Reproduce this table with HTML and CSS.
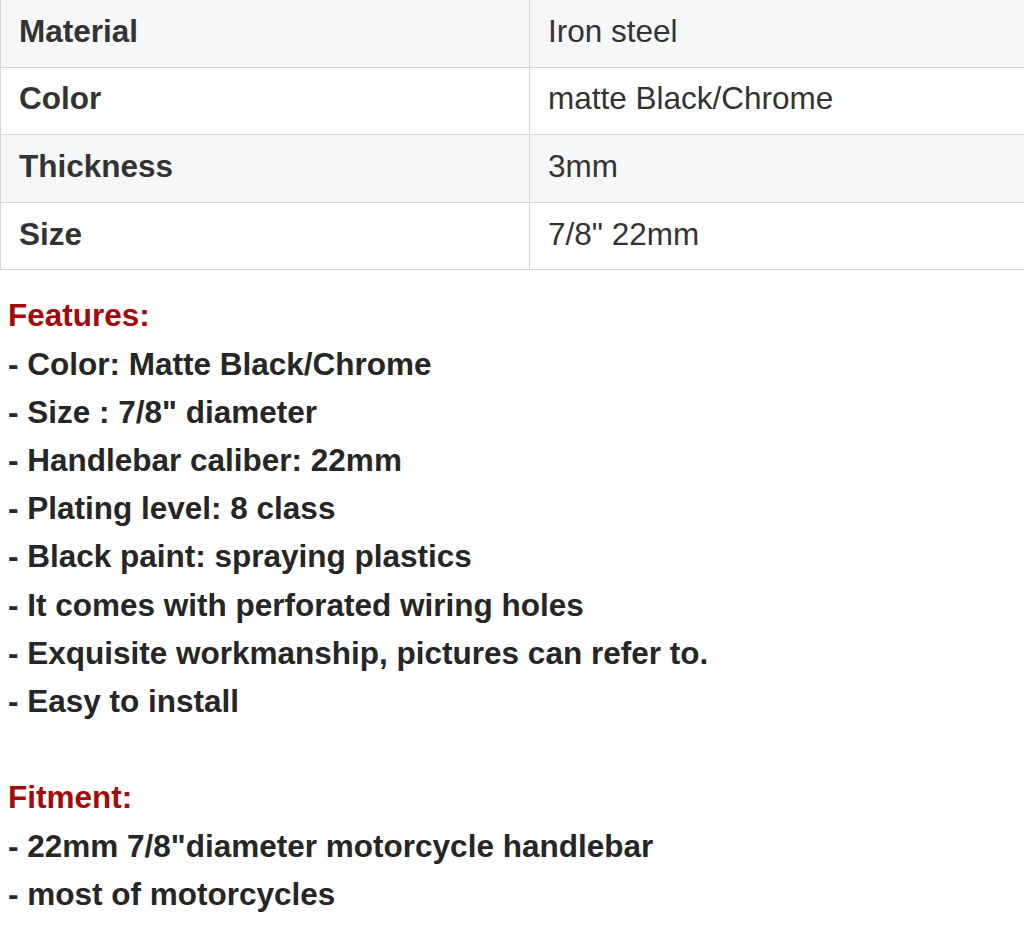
FILE: index.html
```html
<!DOCTYPE html>
<html lang="en">
<head>
    <meta charset="UTF-8">
    <title>Handlebar end mirror - specs</title>
    <link rel="stylesheet" href="styles.css">
</head>
<body>
    <table class="specs">
        <tr class="odd">
            <th>Material</th>
            <td>Iron steel</td>
        </tr>
        <tr>
            <th>Color</th>
            <td>matte Black/Chrome</td>
        </tr>
        <tr class="odd">
            <th>Thickness</th>
            <td>3mm</td>
        </tr>
        <tr>
            <th>Size</th>
            <td>7/8" 22mm</td>
        </tr>
    </table>

    <div class="desc">
        <p class="title">Features:</p>
        <p>- Color: Matte Black/Chrome</p>
        <p>- Size : 7/8" diameter</p>
        <p>- Handlebar caliber: 22mm</p>
        <p>- Plating level: 8 class</p>
        <p>- Black paint: spraying plastics</p>
        <p>- It comes with perforated wiring holes</p>
        <p>- Exquisite workmanship, pictures can refer to.</p>
        <p>- Easy to install</p>
        <p class="blank">&nbsp;</p>
        <p class="title">Fitment:</p>
        <p>- 22mm 7/8"diameter motorcycle handlebar</p>
        <p>- most of motorcycles</p>
    </div>
</body>
</html>
```

FILE: styles.css
```css
body {
    margin: 0;
    overflow: hidden;
    font-family: "Liberation Sans", Arial, sans-serif;
    color: #333;
    background: #fff;
}
.specs {
    width: 1040px;
    border-collapse: collapse;
    margin-top: -1px;
    font-size: 31.5px;
}
.specs tr {
    height: 67.6px;
}
.specs th,
.specs td {
    border: 1px solid #d6d6d6;
    padding: 0 18px 4px;
    text-align: left;
    vertical-align: middle;
}
.specs th {
    width: 492px;
    font-weight: bold;
}
.specs td {
    font-weight: normal;
}
.specs tr.odd {
    background-color: #f6f7f9;
}
.desc {
    padding: 21px 8px 0;
}
.desc p {
    margin: 0;
    font-size: 31.5px;
    font-weight: bold;
    line-height: 48.2px;
    color: #262626;
}
.desc p.title {
    color: #a30a0a;
}
```
